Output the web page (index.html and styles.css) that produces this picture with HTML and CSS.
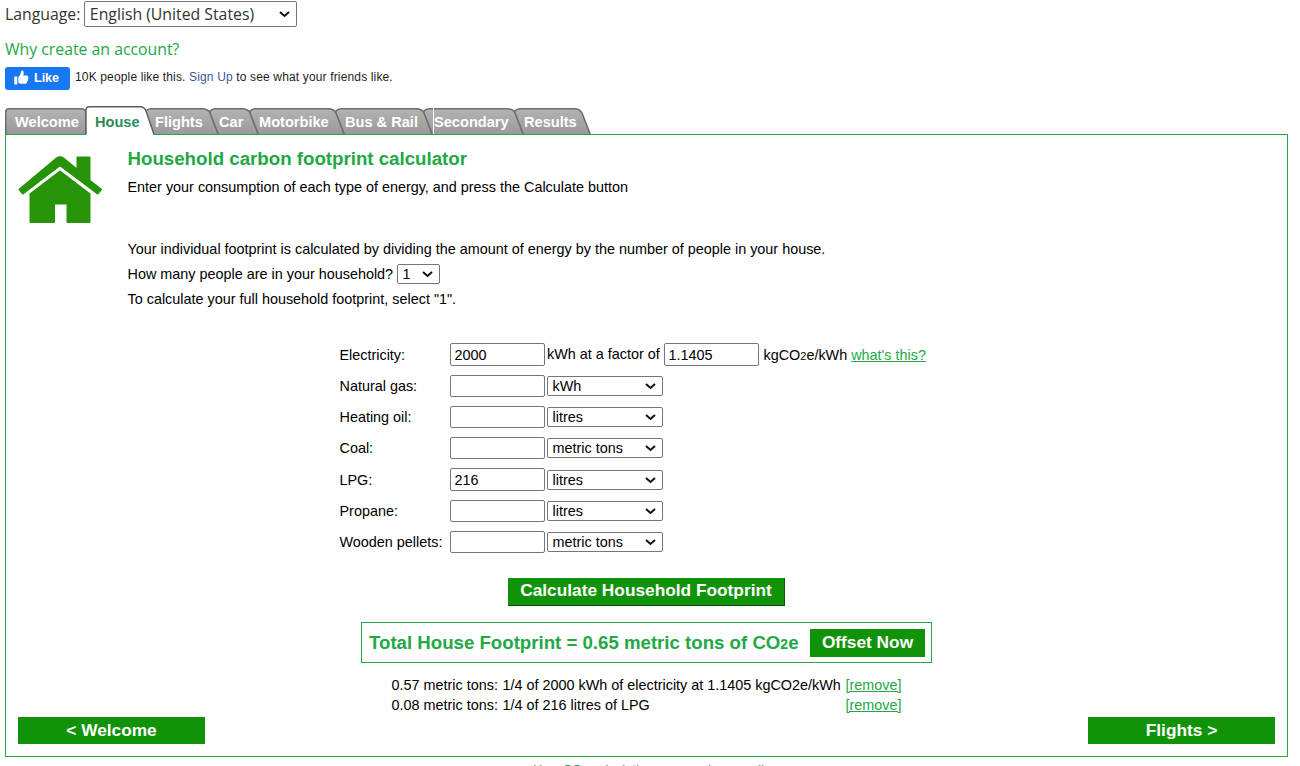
FILE: index.html
```html
<!DOCTYPE html>
<html lang="en">
<head>
<meta charset="utf-8">
<title>Household carbon footprint calculator</title>
<link rel="stylesheet" href="styles.css">
</head>
<body>
<div class="language"><label for="lang">Language:</label><select id="lang" class="lang-select"><option>English (United States)</option></select></div>
<a class="account">Why create an account?</a>
<div class="social">
  <button class="like"><svg width="15" height="15" viewBox="0 0 15 15" fill="#fff"><rect x="0.3" y="6.5" width="3" height="8" rx=".4"/><path d="M4.3 7 Q6.8 4.8 7.1 1.4 Q7.3.2 8.5.5 Q10.5 1.2 9.3 5.5 H13 Q14.6 5.8 14.1 7.4 Q14.9 8.5 13.9 9.6 Q14.2 10.8 13.2 11.5 Q13.2 13.8 11.3 13.8 H7.5 Q5.5 13.8 4.3 12.8 Z"/></svg>Like</button>
  <span class="like-text">10K people like this. <a>Sign Up</a> to see what your friends like.</span>
</div>
<nav class="tabs">
  <svg class="tab-shapes" width="590" height="29" viewBox="5 106 590 29">
    <defs><linearGradient id="g" x1="0" y1="0" x2="0" y2="1"><stop offset="0" stop-color="#b3b3b3"/><stop offset="1" stop-color="#999"/></linearGradient></defs>
    <g fill="url(#g)" stroke="#6c6c6c" stroke-width="1.6">
      <path d="M505 135 L515 111 Q517 108.7 520 108.7 H574 Q580 108.7 582 113 L590.5 135"/>
      <path d="M418 135 L424 111 Q426 108.7 429 108.7 H507 Q513 108.7 515 113 L523.5 135"/>
      <path d="M330 135 L336 111 Q338 108.7 341 108.7 H416 Q422 108.7 424 113 L432.5 135"/>
      <path d="M244 135 L250 111 Q252 108.7 255 108.7 H328 Q334 108.7 336 113 L344.5 135"/>
      <path d="M204 135 L210 111 Q212 108.7 215 108.7 H242 Q248 108.7 250 113 L258.5 135"/>
      <path d="M140 135 L146 111 Q148 108.7 151 108.7 H202 Q208 108.7 210 113 L218.5 135"/>
      <path d="M5.7 135 V112 Q5.7 108.7 9 108.7 H81 Q85 108.7 86 112 V135"/>
    </g>
    <path d="M433.5 108V134" stroke="#fff"/>
    <path d="M5 134.5H595" stroke="#22a845"/>
    <path d="M86 135 V110 Q86 106.7 89.5 106.7 H140 Q144.5 106.7 146 111 L154 135" fill="#fff"/>
    <path d="M86 134.5 V110 Q86 106.7 89.5 106.7 H140 Q144.5 106.7 146 111 L154 134.5" fill="none" stroke="#5c5c5c" stroke-width="1.4"/>
  </svg>
  <a class="tab t1">Welcome</a><a class="tab t2 active">House</a><a class="tab t3">Flights</a><a class="tab t4">Car</a><a class="tab t5">Motorbike</a><a class="tab t6">Bus &amp; Rail</a><a class="tab t7">Secondary</a><a class="tab t8">Results</a>
</nav>
<main class="panel">
  <header class="intro">
    <svg class="house" width="86" height="70" viewBox="0 0 86 70" fill="#279309" stroke="#279309" stroke-linejoin="round" stroke-width="2">
      <path d="M12.5 39 L42 16.5 L71.5 39 V67 H49.5 V48.5 H36 V67 H12.5 Z"/>
      <path d="M1.5 34.5 L38.5 3.5 Q42 1 45.5 3.5 L59.5 15 V2.5 H71.5 V25.5 L83 34.5 L79.5 38.5 L42 10.5 L5 38.5 Z"/>
      <path d="M9 38 L42 12.8 L75.5 38" fill="none" stroke="#fff" stroke-width="1.8"/>
    </svg>
    <div class="intro-text">
      <h1>Household carbon footprint calculator</h1>
      <p>Enter your consumption of each type of energy, and press the Calculate button</p>
      <div class="people">
        <p>Your individual footprint is calculated by dividing the amount of energy by the number of people in your house.</p>
        <p>How many people are in your household? <select class="num-select"><option>1</option></select></p>
        <p>To calculate your full household footprint, select "1".</p>
      </div>
    </div>
  </header>
  <form class="energy">
    <div class="row r-first"><label>Electricity:</label><input value="2000"><span class="factor">kWh at a factor of</span><input value="1.1405"><span class="unit">kgCO<small>2</small>e/kWh <a>what's this?</a></span></div>
    <div class="row"><label>Natural gas:</label><input><select><option>kWh</option></select></div>
    <div class="row"><label>Heating oil:</label><input><select><option>litres</option></select></div>
    <div class="row"><label>Coal:</label><input><select><option>metric tons</option></select></div>
    <div class="row r-tall"><label>LPG:</label><input value="216"><select><option>litres</option></select></div>
    <div class="row"><label>Propane:</label><input><select><option>litres</option></select></div>
    <div class="row"><label>Wooden pellets:</label><input><select><option>metric tons</option></select></div>
  </form>
  <button class="btn calc">Calculate Household Footprint</button>
  <div class="total"><strong>Total House Footprint = 0.65 metric tons of CO<small>2</small>e</strong><button class="btn offset">Offset Now</button></div>
  <div class="results">
    <span>0.57 metric tons:</span><span>1/4 of 2000 kWh of electricity at 1.1405 kgCO2e/kWh</span><a>[remove]</a>
    <span>0.08 metric tons:</span><span>1/4 of 216 litres of LPG</span><a>[remove]</a>
  </div>
  <div class="pager"><button class="btn nav-btn">&lt; Welcome</button><button class="btn nav-btn">Flights &gt;</button></div>
</main>
<a class="method">How CO<small>2</small> calculations are made annually</a>
</body>
</html>
```
FILE: styles.css
```css
* { box-sizing: border-box; }
html { height: 100%; overflow: hidden; }
body { margin: 0; padding: 0 12px 0 5px; height: 100%; overflow: hidden; background: #fff; color: #000; font: 14.4px/20px "Liberation Sans", Arial, sans-serif; }
h1, p { margin: 0; }
button { border: 0; font-family: inherit; }

select, input { font: 14.4px "Liberation Sans", Arial, sans-serif; color: #000; background: #fff; border: 1px solid #767676; border-radius: 2px; }
select {
  appearance: none;
  padding: 0 20px 0 4.5px;
  background: #fff url("data:image/svg+xml,%3Csvg xmlns='http://www.w3.org/2000/svg' width='11' height='8'%3E%3Cpath d='M1 2L5.5 6L10 2' fill='none' stroke='%23111' stroke-width='2'/%3E%3C/svg%3E") no-repeat right 6px center;
}

.language { display: flex; align-items: center; height: 28px; gap: 4px; font: 15.8px "Open Sans", sans-serif; color: #333; }
.lang-select { width: 213px; height: 26px; font: 15.8px "Open Sans", sans-serif; color: #333; }
.account { display: block; margin-top: 9px; height: 24px; font: 15.8px/24px "Open Sans", sans-serif; color: #22a845; }
.social { display: flex; align-items: center; gap: 5px; height: 23px; margin-top: 6px; }
.like { display: flex; align-items: center; gap: 5px; width: 65px; height: 23px; padding: 0 0 2px 9px; border-radius: 3px; background: #1877f2; color: #fff; font-size: 12.5px; font-weight: bold; }
.like-text { padding-bottom: 3px; font-size: 12px; letter-spacing: .15px; color: #1c1e21; }
.like-text a { color: #385898; }

.tabs { position: relative; display: flex; height: 29px; margin-top: 16px; padding-left: 10px; }
.tab-shapes { position: absolute; left: 0; top: 0; z-index: 0; }
.tab { z-index: 1; padding-top: 6px; font-size: 14.6px; font-weight: bold; white-space: nowrap; color: #fff; }
.active { color: #2e8b57; }
.t1 { width: 80px; } .t2 { width: 60px; } .t3 { width: 64px; } .t4 { width: 40px; }
.t5 { width: 86px; } .t6 { width: 89px; } .t7 { width: 90px; }

.panel { display: flex; flex-direction: column; height: 623px; margin-top: -1px; border: 1px solid #22a845; padding: 0 12px; }
.intro { display: flex; }
.house { margin: 20px 23.5px 0 0; flex: none; }
.intro-text { padding-top: 13px; }
h1 { font-size: 18.7px; line-height: 22px; color: #22a845; }
.intro-text p { height: 25px; line-height: 25px; }
.intro-text > p { margin-top: 5px; }
.people { margin-top: 37px; }
.num-select { width: 43px; height: 20px; }

.energy { display: grid; margin: 27px 0 0 321.5px; }
.row { display: flex; align-items: center; height: 31px; gap: 2px; }
.row label { width: 108.5px; }
.row input { width: 95px; height: 22px; padding: 0 3.5px; }
.row select { width: 116px; height: 20px; }
.r-first input, .r-tall input { height: 23px; }
.r-tall { height: 32px; }
.r-tall label, .r-tall select { margin-top: 1px; }
.r-tall input { padding-top: 1px; }
.factor { width: 115px; padding-bottom: 2px; white-space: nowrap; }
.unit { margin: 1px 0 0 2.5px; }
small { font-size: 11px; line-height: 1; }
a { color: #22a845; }
.unit a, .results a { text-decoration: underline; }

.btn { background: #119309; color: #fff; font-size: 17.3px; font-weight: bold; padding: 0 0 2px; }
.calc { align-self: center; width: 277px; height: 28px; margin: 21px 0 0 0; border-right: 1px solid #0b5a06; border-bottom: 1px solid #0b4a06; }
.total { display: flex; align-items: center; justify-content: space-between; align-self: center; width: 571px; height: 41px; margin-top: 16px; padding: 0 6px 0 7px; border: 1px solid #22a845; color: #22a845; white-space: nowrap; }
.total strong { padding-top: 1px; font-size: 18.65px; }
.total small { font-size: 14px; }
.offset { width: 115px; height: 28px; padding-bottom: 1px; }
.results { display: grid; grid-template-columns: 111px 343px auto; justify-content: start; margin: 12px 0 0 373.5px; white-space: nowrap; }
.pager { display: flex; justify-content: space-between; margin-top: 2px; }
.nav-btn { width: 187px; height: 27px; padding-bottom: 0; }
.method { display: block; margin: 5px 0 0 528px; font-size: 13px; line-height: 15px; white-space: nowrap; }
```
